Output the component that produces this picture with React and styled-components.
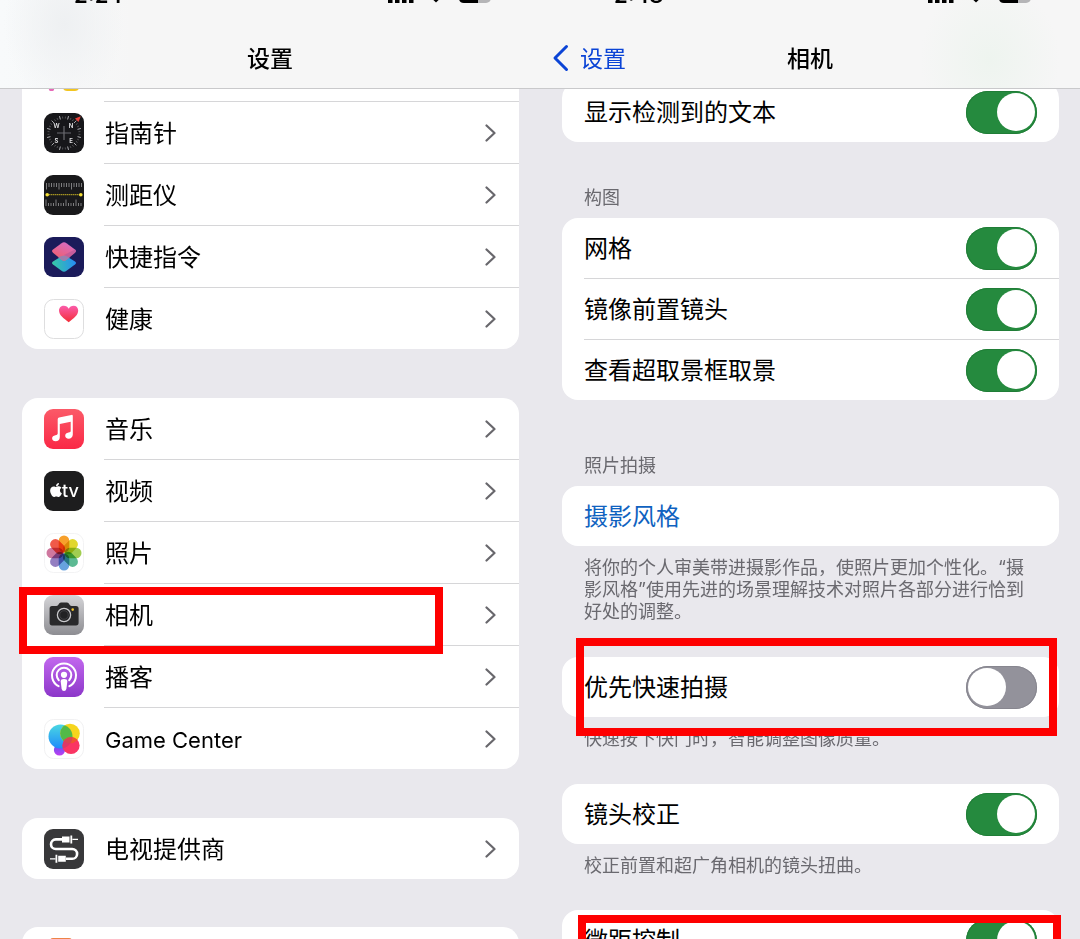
import React from "react";
import styled, { createGlobalStyle } from "styled-components";
import { FaApple } from "react-icons/fa";

const GlobalStyle = createGlobalStyle`
  *, *::before, *::after { box-sizing: border-box; }
  body {
    margin: 0;
    background: #e9e8ed;
    color: #000;
    font-family: Inter, "Noto Sans CJK SC", sans-serif;
  }
`;

const Screens = styled.div`
  display: grid;
  grid-template-columns: 1fr 1fr;
  height: 100vh;
  overflow: hidden;
`;

const Screen = styled.section`
  display: flex;
  flex-direction: column;
  min-width: 0;
  min-height: 0;
  overflow: hidden;
`;

const TopBar = styled.header`
  display: flex;
  flex-direction: column;
  justify-content: flex-end;
  flex: none;
  height: 89px;
  overflow: hidden;
  border-bottom: 1px solid #c9c9cb;
  background: ${(p) => p.$tint}, #f6f6f6;
`;

const StatusRow = styled.div`
  display: flex;
  flex: none;
  align-items: flex-start;
  justify-content: space-between;
  height: 50px;
  padding: 9px 48px 0 74px;
`;

const Time = styled.span`
  font-size: 22px;
  font-weight: 600;
  line-height: 16px;
`;

const StatusIcons = styled.svg`
  width: 104px;
  height: 16px;
`;

const NavRow = styled.div`
  display: grid;
  grid-template-columns: 1fr auto 1fr;
  align-items: center;
  flex: none;
  height: 60px;
  padding: 0 12px;
`;

const Title = styled.h1`
  grid-column: 2;
  margin: 0;
  padding-top: 2px;
  font-size: 23px;
  font-weight: 500;
  line-height: 32px;
`;

const BackLink = styled.a`
  display: flex;
  align-items: center;
  gap: 11px;
  grid-row: 1;
  color: #0b44d6;
  text-decoration: none;
`;

const BackText = styled.span`
  padding-top: 2px;
  font-size: 23px;
  font-weight: 400;
  line-height: 32px;
`;

const Pane = styled.main`
  flex: 1;
  min-height: 0;
  overflow: hidden;
`;

const Scrolled = styled.div`
  margin-top: -${(p) => p.$by}px;
  padding: 0 21px 0 22px;
`;

const List = styled.ul`
  margin: 0 0 ${(p) => p.$after}px;
  padding: 0;
  list-style: none;
  background: #fff;
  border-radius: 16px;
`;

const Item = styled.li`
  position: relative;
`;

const ItemLink = styled.a`
  display: flex;
  align-items: center;
  gap: 20px;
  padding-left: 22px;
  color: inherit;
  text-decoration: none;
`;

const ItemBody = styled.span`
  display: flex;
  flex: 1;
  align-items: center;
  justify-content: space-between;
  height: ${(p) => (p.$last ? 61 : 62)}px;
  padding: 0 23px 0 1px;
  border-bottom: ${(p) => (p.$last ? "none" : "1px solid #d6d6d8")};
`;

const Label = styled.span`
  padding-top: 2px;
  font-size: 24px;
  font-weight: 400;
  line-height: 32px;
`;

const LatinLabel = styled(Label)`
  font-size: 22px;
`;

const AppIcon = styled.svg`
  flex: none;
  width: 40px;
  height: 40px;
`;

const Chevron = styled.svg`
  width: 11px;
  height: 18px;
`;

const Highlight = styled.span`
  position: absolute;
  inset: ${(p) => p.$inset};
  border: 8px solid #fe0000;
  pointer-events: none;
`;

const Group = styled.section`
  margin-bottom: ${(p) => p.$after}px;
`;

const GroupTitle = styled.h2`
  margin: 0 22px 9px;
  color: #6a696f;
  font-size: 18px;
  font-weight: 400;
  line-height: 22px;
`;

const Note = styled.p`
  margin: 11px 22px 0;
  color: #6a696f;
  font-size: 18px;
  font-weight: 400;
  line-height: 22px;
`;

const Card = styled.div`
  position: relative;
  padding-left: 22px;
  background: #fff;
  border-radius: 16px;
`;

const SettingRow = styled.label`
  display: flex;
  align-items: center;
  justify-content: space-between;
  height: ${(p) => (p.$divided ? 61 : 60)}px;
  padding-right: 22px;
  border-bottom: ${(p) => (p.$divided ? "1px solid #d6d6d8" : "none")};
`;

const Switch = styled.input.attrs({ type: "checkbox", role: "switch" })`
  appearance: none;
  display: flex;
  align-items: center;
  width: 71px;
  height: 43px;
  margin: 0;
  padding: 0 2px;
  border-radius: 22px;
  background: #93929b;
  box-shadow: inset 0 0 0 1px #87868f;

  &::before {
    content: "";
    width: 38px;
    height: 38px;
    border-radius: 50%;
    background: #fff;
  }

  &:checked {
    justify-content: flex-end;
    background: #258a3e;
    box-shadow: inset 0 0 0 1px #207d37;
  }
`;

const StyleLink = styled.a`
  display: flex;
  align-items: center;
  height: 60px;
  color: #0f62c0;
  text-decoration: none;
`;

function Tile({ fill, stroke, children }) {
  return (
    <AppIcon viewBox="0 0 40 40" aria-hidden="true">
      <rect x={stroke ? 0.5 : 0} y={stroke ? 0.5 : 0} width={stroke ? 39 : 40} height={stroke ? 39 : 40} rx="9" fill={fill} stroke={stroke} />
      {children}
    </AppIcon>
  );
}

function FreeformIcon() {
  return (
    <Tile fill="#fff">
      <path d="M7.5 38 Q3 30 7 24" stroke="#e66bb8" strokeWidth="5" fill="none" strokeLinecap="round" />
      <rect x="19" y="22" width="16" height="18" rx="4" fill="#f2c521" />
    </Tile>
  );
}

function CompassIcon() {
  return (
    <Tile fill="#17171a">
      {Array.from({ length: 36 }, (_, i) => (
        <path key={i} d={i % 3 ? "M20 3.5v2" : "M20 2.5v3.5"} stroke={i % 3 ? "#5c5c60" : "#c4c4c8"} strokeWidth="0.8" transform={`rotate(${i * 10 + 45} 20 20)`} />
      ))}
      <path d="M36.8 3.2 L31 5.5 L34.5 9 Z" fill="#e8413a" />
      <path d="M20 13v14M13 20h14" stroke="#6b6b70" strokeWidth="1.2" />
      <g fill="#e8e8ea" fontSize="6" fontWeight="600" textAnchor="middle">
        <text x="12.5" y="14.5">W</text>
        <text x="27" y="14.5">N</text>
        <text x="12.5" y="29.5">S</text>
        <text x="27" y="29.5">E</text>
      </g>
    </Tile>
  );
}

function MeasureIcon() {
  return (
    <Tile fill="#19191b">
      {Array.from({ length: 15 }, (_, i) => (
        <g key={i} stroke="#98989b" strokeWidth="0.8">
          <path d={`M${2.5 + i * 2.5} 8v${i % 5 === 0 ? 6.5 : 4}`} />
          <path d={`M${2 + i * 2.5} 31v-${i % 4 === 0 ? 6.5 : 3}`} />
        </g>
      ))}
      <path d="M3 19.7h34" stroke="#c4b024" strokeWidth="1" strokeDasharray="1.5 .5" />
      <circle cx="3.2" cy="19.7" r="1.8" fill="#f5df37" />
      <circle cx="36.8" cy="19.7" r="1.8" fill="#f5df37" />
    </Tile>
  );
}

function ShortcutsIcon() {
  return (
    <Tile fill="#1b1b5a">
      <defs>
        <linearGradient id="sc-low" x1="0" y1="0.5" x2="1" y2="0.4">
          <stop offset="0" stopColor="#38c8a4" />
          <stop offset="1" stopColor="#268df5" />
        </linearGradient>
        <linearGradient id="sc-top" x1="0.75" y1="0" x2="0.25" y2="1">
          <stop offset="0" stopColor="#d76cc6" />
          <stop offset="1" stopColor="#f15e67" />
        </linearGradient>
      </defs>
      <path d="M18 19 L9 24.5 Q7 26 9 27.5 L17.5 33.8 Q20 35.5 22.5 33.8 L31 27.5 Q33 26 31 24.5 L22 19 Q20 18 18 19Z" fill="url(#sc-low)" />
      <path d="M17.5 6.2 L9 12.5 Q7 14 9 15.7 L17.5 22.8 Q20 24.5 22.5 22.8 L31 15.7 Q33 14 31 12.5 L22.5 6.2 Q20 4.5 17.5 6.2Z" fill="url(#sc-top)" />
      <path d="M14 20 L18 19 Q20 18 22 19 L26 20 L22.5 22.8 Q20 24.5 17.5 22.8Z" fill="#9a7fae" />
      <path d="M20 18 L31 12.5 Q33 14 31 15.7 L25.5 20.4Z" fill="#b3569b" opacity=".6" />
    </Tile>
  );
}

function HealthIcon() {
  return (
    <Tile fill="#fff" stroke="#dededf">
      <defs>
        <linearGradient id="heart" x1="0" y1="0" x2="0" y2="1">
          <stop offset="0" stopColor="#fb5cab" />
          <stop offset="1" stopColor="#f32d37" />
        </linearGradient>
      </defs>
      <path d="M24.7 23.2 C19.5 19.5 15 16 15 11.6 C15 8.7 17.2 6.7 19.8 6.7 C22 6.7 23.8 7.9 24.7 9.8 C25.6 7.9 27.4 6.7 29.6 6.7 C32.2 6.7 34.2 8.7 34.2 11.6 C34.2 16 29.9 19.5 24.7 23.2Z" fill="url(#heart)" />
    </Tile>
  );
}

function MusicIcon() {
  return (
    <Tile fill="url(#music)">
      <defs>
        <linearGradient id="music" x1="0" y1="0" x2="0" y2="1">
          <stop offset="0" stopColor="#fb5a68" />
          <stop offset="1" stopColor="#fa2846" />
        </linearGradient>
      </defs>
      <path d="M13.7 10.2 Q13.7 8.8 15.1 8.5 L27.4 5.9 Q28.8 5.6 28.8 7 V25.5 C28.8 28.2 27 29.7 24.6 29.7 C22.5 29.7 21.2 28.5 21.2 26.8 C21.2 25 22.5 24 24.5 23.6 C26.2 23.3 26.7 23 26.7 21.8 V12.7 L15.8 15 V28 C15.8 30.9 14 32.3 11.6 32.3 C9.5 32.3 8.1 31.1 8.1 29.3 C8.1 27.6 9.4 26.6 11.4 26.2 C13.1 25.9 13.7 25.6 13.7 24.3Z" fill="#fff" />
    </Tile>
  );
}

function TvIcon() {
  return (
    <Tile fill="#1d1d1e">
      <FaApple x="4" y="11" width="15" height="15" color="#fff" />
      <text x="18" y="26" fill="#fff" fontSize="18" fontWeight="500">tv</text>
    </Tile>
  );
}

const PETALS = ["#f79a1d", "#e0d51e", "#9bcb45", "#52b68c", "#5d9cdc", "#8c76bd", "#cc7099", "#f0503d"];

function PhotosIcon() {
  return (
    <Tile fill="#fff" stroke="#f3f3f4">
      <g style={{ isolation: "isolate" }}>
        {PETALS.map((color, i) => (
          <rect key={color} x="14.7" y="2.5" width="10.6" height="17" rx="5.3" fill={color} opacity=".94" transform={`rotate(${i * 45} 20 20)`} style={{ mixBlendMode: "multiply" }} />
        ))}
      </g>
    </Tile>
  );
}

function CameraIcon() {
  return (
    <Tile fill="url(#cam)">
      <defs>
        <linearGradient id="cam" x1="0" y1="0" x2="0" y2="1">
          <stop offset="0" stopColor="#d5d5d8" />
          <stop offset="1" stopColor="#8d8d92" />
        </linearGradient>
      </defs>
      <path d="M8 11 H12.5 Q14 11 14.7 9.2 Q15.4 7.4 17 7.4 H23 Q24.6 7.4 25.3 9.2 Q26 11 27.5 11 H32 Q34.6 11 34.6 13.6 V27.8 Q34.6 30.4 32 30.4 H8 Q5.6 30.4 5.6 27.8 V13.6 Q5.6 11 8 11Z" fill="#29292b" />
      <circle cx="20" cy="20" r="6.6" fill="#222224" stroke="#c9c9cc" strokeWidth="1.3" />
      <circle cx="20" cy="20" r="4.3" fill="none" stroke="#48484b" strokeWidth=".8" />
      <circle cx="28.7" cy="14.6" r="1.3" fill="#f3c62d" />
    </Tile>
  );
}

function PodcastIcon() {
  return (
    <Tile fill="url(#pod)">
      <defs>
        <linearGradient id="pod" x1="0" y1="0" x2="0" y2="1">
          <stop offset="0" stopColor="#c268ee" />
          <stop offset="1" stopColor="#8c37c9" />
        </linearGradient>
      </defs>
      <g fill="none" stroke="#fff" strokeWidth="2" strokeLinecap="round">
        <path d="M14.6 29.2 A12 12 0 1 1 25.4 29.2" />
        <path d="M14.8 23.2 A7.3 7.3 0 1 1 25.2 23.2" />
      </g>
      <circle cx="20" cy="17.8" r="3.1" fill="#fff" />
      <path d="M16.7 24.5 Q16.7 22.1 20 22.1 Q23.3 22.1 23.3 24.5 L22.4 31.8 Q22 34 20 34 Q18 34 17.6 31.8Z" fill="#fff" />
    </Tile>
  );
}

function GameCenterIcon() {
  return (
    <Tile fill="#fff" stroke="#f1f1f2">
      <defs>
        <linearGradient id="gc-blue" x1="0" y1="0" x2="0" y2="1">
          <stop offset="0" stopColor="#4ad7e2" />
          <stop offset="1" stopColor="#1f8bfa" />
        </linearGradient>
        <linearGradient id="gc-purple" x1="0" y1="0" x2="0" y2="1">
          <stop offset="0" stopColor="#5a55ef" />
          <stop offset="1" stopColor="#c13df2" />
        </linearGradient>
        <clipPath id="gc-blue-clip"><circle cx="16.5" cy="17.5" r="12" /></clipPath>
        <clipPath id="gc-yellow-clip"><circle cx="26" cy="14.5" r="9.8" /></clipPath>
      </defs>
      <circle cx="15.5" cy="31" r="5.6" fill="url(#gc-purple)" />
      <circle cx="16.5" cy="17.5" r="12" fill="url(#gc-blue)" />
      <circle cx="26" cy="14.5" r="9.8" fill="#f6d51d" />
      <circle cx="26" cy="14.5" r="9.8" fill="#52b948" clipPath="url(#gc-blue-clip)" />
      <circle cx="27" cy="26.5" r="8.6" fill="#fa3563" />
      <circle cx="27" cy="26.5" r="8.6" fill="#f0552f" clipPath="url(#gc-yellow-clip)" />
      <circle cx="27" cy="26.5" r="8.6" fill="#c93a6b" opacity=".6" clipPath="url(#gc-blue-clip)" />
    </Tile>
  );
}

function TvProviderIcon() {
  return (
    <Tile fill="#38383a">
      <path d="M18 10.4 H11.8 A4.8 4.8 0 0 0 11.8 20 H28.2 A4.9 4.9 0 0 1 28.2 29.8 H22" fill="none" stroke="#fff" strokeWidth="2.6" />
      <path d="M18 7.4h7.5v6H18zM26.4 6.4h1.8v8h-1.8zM28.5 9.8h5.5v1.2h-5.5z" fill="#fff" />
      <path d="M14.2 26.8h7.6v6h-7.6zM11.5 25.8h1.8v8h-1.8zM6 29.2h5.3v1.2H6z" fill="#fff" />
    </Tile>
  );
}

function OrangeIcon() {
  return (
    <Tile fill="#fff">
      <rect x="6" y="0" width="22" height="30" rx="3" fill="#ee8347" />
    </Tile>
  );
}

const LISTS = [
  {
    after: 49,
    apps: [
      { Icon: FreeformIcon },
      { Icon: CompassIcon, name: "指南针" },
      { Icon: MeasureIcon, name: "测距仪" },
      { Icon: ShortcutsIcon, name: "快捷指令" },
      { Icon: HealthIcon, name: "健康" },
    ],
  },
  {
    after: 49,
    apps: [
      { Icon: MusicIcon, name: "音乐" },
      { Icon: TvIcon, name: "视频" },
      { Icon: PhotosIcon, name: "照片" },
      { Icon: CameraIcon, name: "相机", marked: true },
      { Icon: PodcastIcon, name: "播客" },
      { Icon: GameCenterIcon, name: "Game Center", latin: true },
    ],
  },
  { after: 48, apps: [{ Icon: TvProviderIcon, name: "电视提供商" }] },
  { after: 48, apps: [{ Icon: OrangeIcon }] },
];

function Status({ time }) {
  return (
    <StatusRow>
      <Time>{time}</Time>
      <StatusIcons viewBox="0 0 104 16" aria-hidden="true">
        <path d="M0 11h4.5v5H0zM7 8h4.5v8H7zM14 4h4.5v12H14zM21 0h4.5v16H21z" />
        <path d="M48 15.5 L36 4 Q48 -5 60 4Z" />
        <rect x="71" y="0" width="32" height="16" rx="5" fill="#b5b5b7" />
        <path d="M76 0H90V16H76Q71 16 71 11V5Q71 0 76 0Z" />
      </StatusIcons>
    </StatusRow>
  );
}

function AppRow({ Icon, name, latin, marked, last }) {
  const Name = latin ? LatinLabel : Label;
  return (
    <Item>
      <ItemLink href="#">
        <Icon />
        <ItemBody $last={last}>
          <Name>{name}</Name>
          <Chevron viewBox="0 0 11 18" aria-hidden="true">
            <path d="M1.5 1.5 L9.5 9 L1.5 16.5" fill="none" stroke="#68676c" strokeWidth="2.2" strokeLinecap="round" strokeLinejoin="round" />
          </Chevron>
        </ItemBody>
      </ItemLink>
      {marked && <Highlight $inset="3px 76px -8px -3px" />}
    </Item>
  );
}

function Toggle({ label, on, divided }) {
  return (
    <SettingRow $divided={divided}>
      <Label>{label}</Label>
      <Switch defaultChecked={on} />
    </SettingRow>
  );
}

export default function App() {
  return (
    <>
      <GlobalStyle />
      <Screens>
        <Screen>
          <TopBar $tint="radial-gradient(ellipse 60px 80px at 64px 24px, #eef0f2, transparent), linear-gradient(90deg, #f8fafb, transparent 25%)">
            <Status time="2:24" />
            <NavRow>
              <Title>设置</Title>
            </NavRow>
          </TopBar>
          <Pane>
            <Scrolled $by={49}>
              {LISTS.map(({ apps, after }, i) => (
                <List key={i} $after={after}>
                  {apps.map((app, j) => (
                    <AppRow key={j} {...app} last={j === apps.length - 1} />
                  ))}
                </List>
              ))}
            </Scrolled>
          </Pane>
        </Screen>

        <Screen>
          <TopBar $tint="radial-gradient(ellipse 70px 80px at 450px 60px, #eef4ef, transparent)">
            <Status time="2:48" />
            <NavRow>
              <BackLink href="#">
                <svg width="17" height="28" viewBox="0 0 17 28" aria-hidden="true">
                  <path d="M14.5 2.5 L3 14 L14.5 25.5" fill="none" stroke="#0b44d6" strokeWidth="3" strokeLinecap="round" strokeLinejoin="round" />
                </svg>
                <BackText>设置</BackText>
              </BackLink>
              <Title>相机</Title>
            </NavRow>
          </TopBar>
          <Pane>
            <Scrolled $by={7}>
              <Group $after={45}>
                <Card>
                  <Toggle label="显示检测到的文本" on />
                </Card>
              </Group>
              <Group $after={55}>
                <GroupTitle>构图</GroupTitle>
                <Card>
                  <Toggle label="网格" on divided />
                  <Toggle label="镜像前置镜头" on divided />
                  <Toggle label="查看超取景框取景" on />
                </Card>
              </Group>
              <Group $after={34}>
                <GroupTitle>照片拍摄</GroupTitle>
                <Card>
                  <StyleLink href="#">
                    <Label>摄影风格</Label>
                  </StyleLink>
                </Card>
                <Note>将你的个人审美带进摄影作品，使照片更加个性化。“摄影风格”使用先进的场景理解技术对照片各部分进行恰到好处的调整。</Note>
              </Group>
              <Group $after={34}>
                <Card>
                  <Toggle label="优先快速拍摄" />
                  <Highlight $inset="-19px 2px -19px 14px" />
                </Card>
                <Note>快速按下快门时，智能调整图像质量。</Note>
              </Group>
              <Group $after={33}>
                <Card>
                  <Toggle label="镜头校正" on />
                </Card>
                <Note>校正前置和超广角相机的镜头扭曲。</Note>
              </Group>
              <Card>
                <Toggle label="微距控制" on />
                <Highlight $inset="5px -2px -18px 16px" />
              </Card>
            </Scrolled>
          </Pane>
        </Screen>
      </Screens>
    </>
  );
}
